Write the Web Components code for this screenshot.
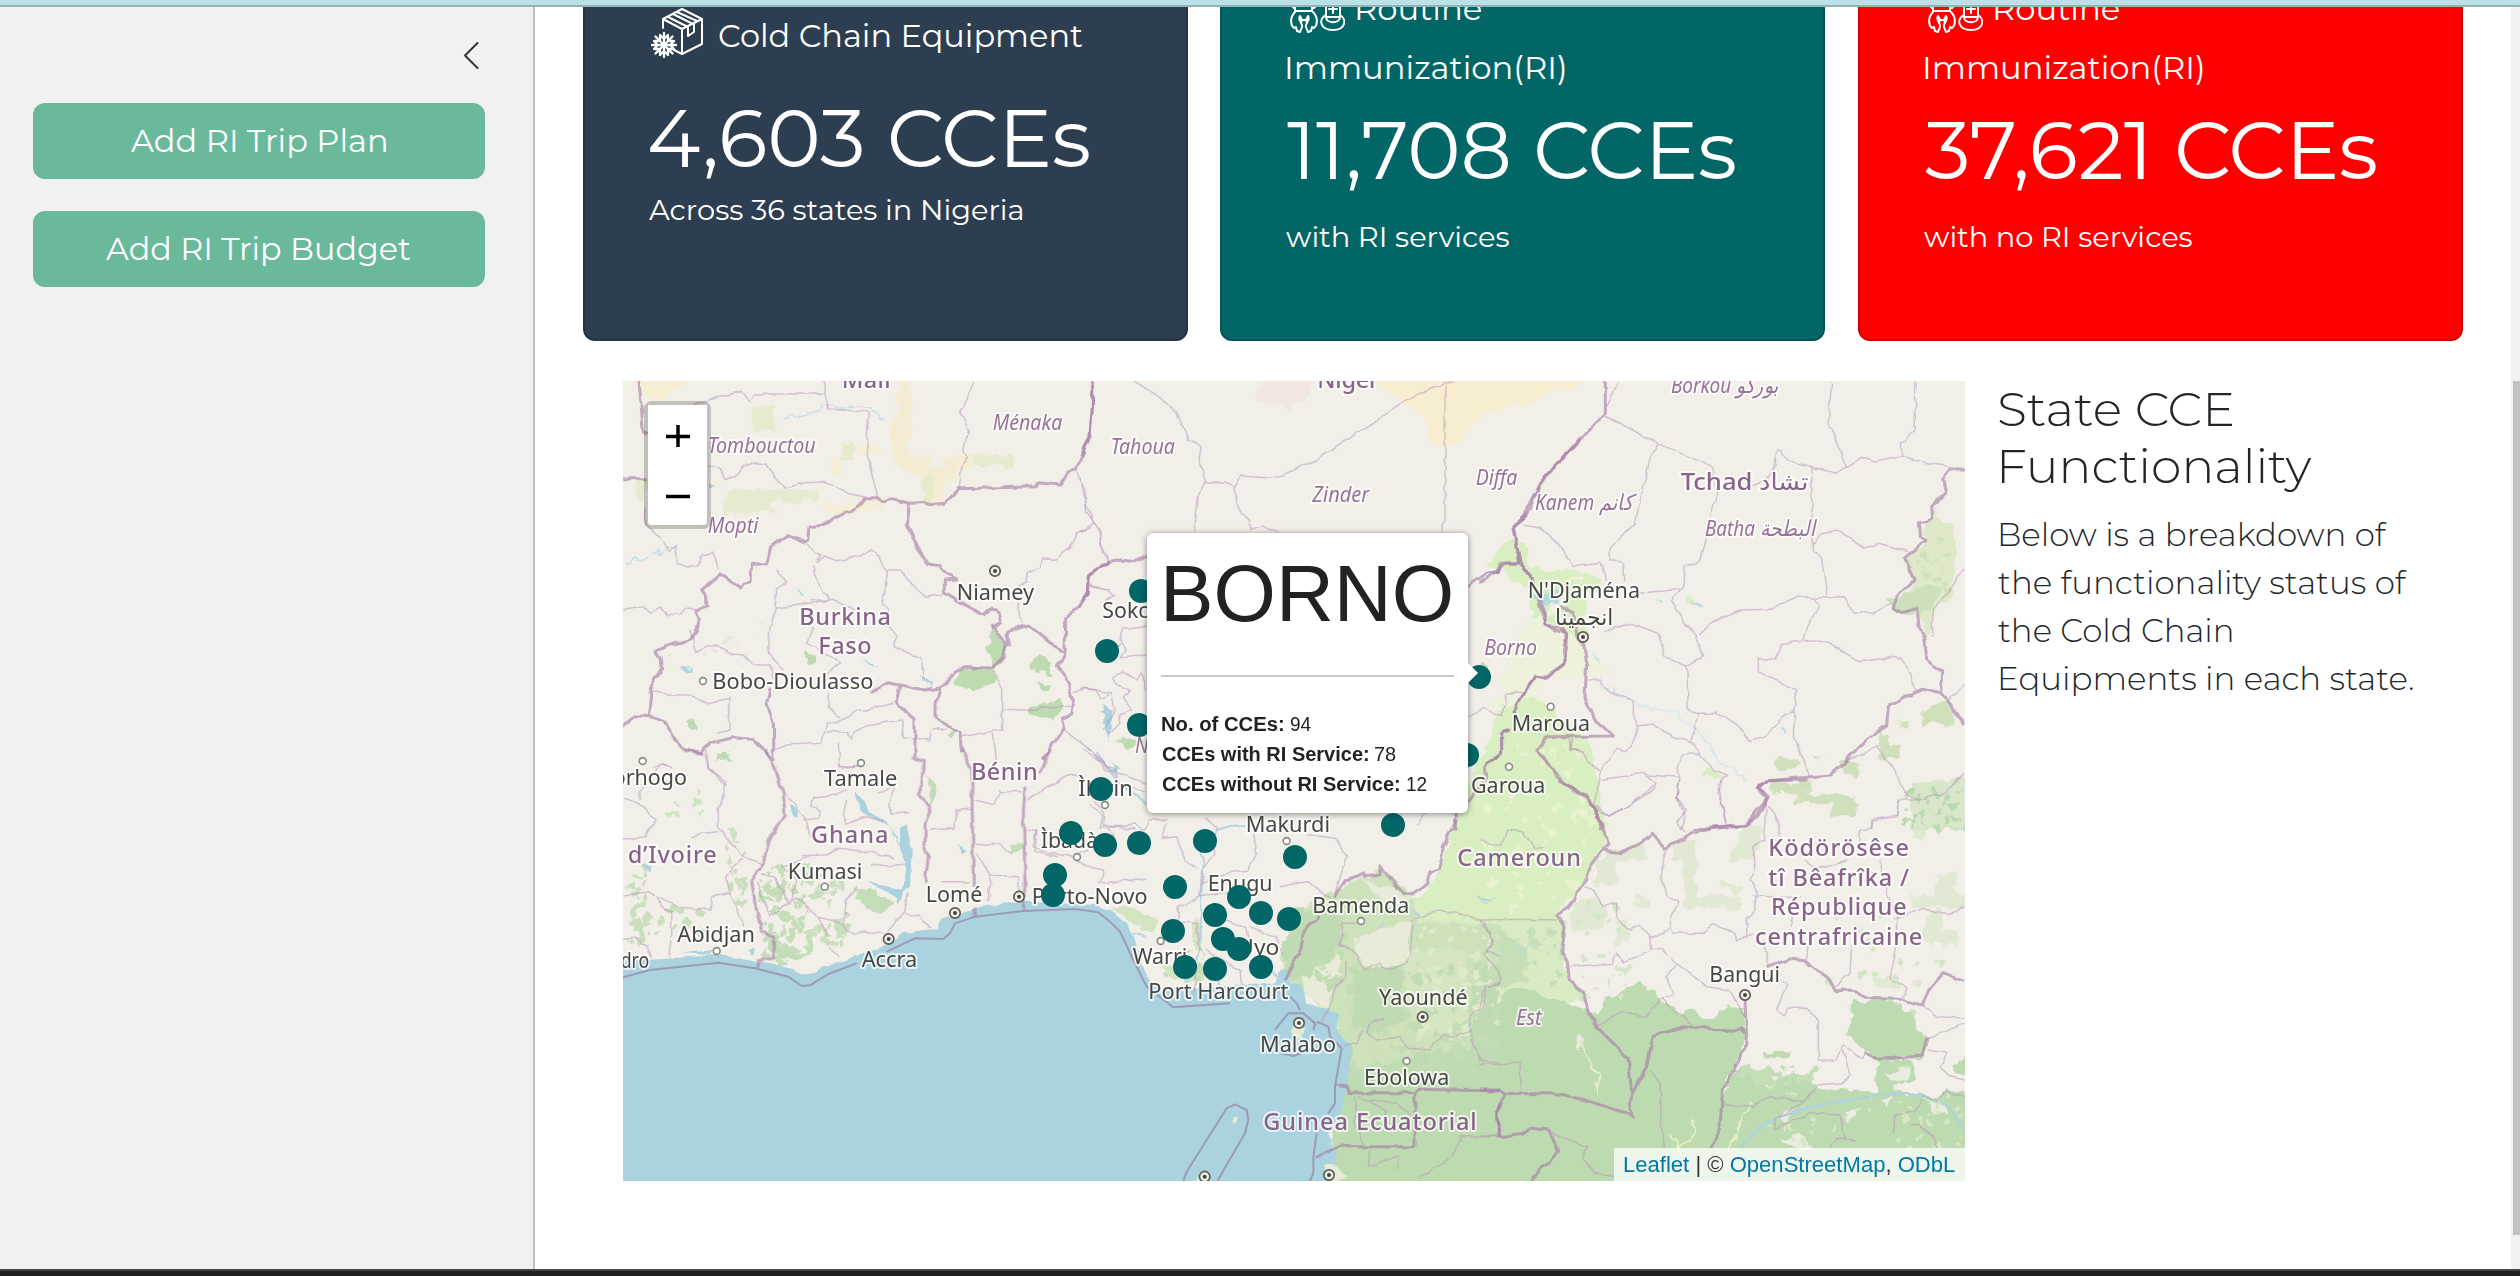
<!DOCTYPE html>
<html lang="en">
<head>
<meta charset="utf-8">
<title>Cold Chain Dashboard</title>
<style>
html,body{margin:0;height:100%;overflow:hidden;background:#fff}
body{font-family:Montserrat,Lato,"Liberation Sans",sans-serif;color:#212529}
</style>
</head>
<body>
<app-shell></app-shell>
<script>
const make=(tag,html,init)=>customElements.define(tag,class extends HTMLElement{
  constructor(){super();this.attachShadow({mode:'open'});}
  connectedCallback(){this.shadowRoot.innerHTML=html(this);if(init)init(this);}
});
const ctx=document.createElement('canvas').getContext('2d');

/* One line of text whose ink spans exactly the width given in "w". */
make('fit-text',()=>`<style>:host{display:block;white-space:nowrap}span{display:inline-block;transform-origin:0 50%}</style><span><slot></slot></span>`,el=>{
  const w=+el.getAttribute('w'),s=getComputedStyle(el),span=el.shadowRoot.querySelector('span');
  ctx.font=`${s.fontWeight} ${s.fontSize} ${s.fontFamily}`;
  const m=ctx.measureText(el.textContent),k=w/(m.actualBoundingBoxRight+m.actualBoundingBoxLeft);
  el.style.width=w+'px';
  span.style.transform=`translateX(${m.actualBoundingBoxLeft*k}px) scaleX(${k})`;
});

make('side-button',()=>`<style>:host{display:flex;justify-content:center;box-sizing:border-box;height:76px;padding-right:2px;border-radius:12px;background:#6ab99b;color:#fff;font-size:32px;line-height:75px}</style><slot></slot>`);

make('side-bar',()=>`<style>
:host{display:flex;flex-direction:column;gap:32px;width:452px;box-sizing:content-box;padding:35px 48px 0 33px;background:#f1f1f1;border-right:2px solid #bfbfbf}
.top{display:flex;justify-content:flex-end;height:29px;padding-right:6px}
</style><div class="top"><svg width="16" height="28" viewBox="0 0 16 28" fill="none" stroke="#333" stroke-width="2"><path d="M14.5 1 2 13.5 14.5 26" stroke-linejoin="round" stroke-linecap="round"/></svg></div>
<side-button><fit-text w="255">Add RI Trip Plan</fit-text></side-button>
<side-button><fit-text w="305">Add RI Trip Budget</fit-text></side-button>`);

const boxIcon=`<svg width="53" height="50" viewBox="0 0 53 50" fill="none" stroke="#fff" stroke-width="2" stroke-linejoin="round" stroke-linecap="round">
<path d="M12 20V11L31 1 51 11V36L31 46 23 42M12 11 31 21 51 11M31 21V46M17 9 36 18.500M22 6 41 15.500M26 4 46 13M37 18.500V28L43 24V15.500"/>
<path stroke-width="2.300" d="M13 25V49M1 37H25M4.500 28.500 21.500 45.500M21.500 28.500 4.500 45.500M9 27 13 31 17 27M9 47 13 43 17 47M3 33 7 37 3 41M23 33 19 37 23 41M4 33 9 33 9 28M17 28 17 33 22 33M4 41 9 41 9 46M17 46 17 41 22 41"/></svg>`;
const babyIcon=`<svg width="56" height="50" viewBox="0 0 56 50" fill="none" stroke="#fff" stroke-width="2" stroke-linejoin="round" stroke-linecap="round">
<path d="M4 20C1 16 5 9 11 9H18C24 9 28 16 25 20M2 22 5 25 7 23M28 22 25 25 23 23M6 18V28H23V18M6 29C1 34 1 42 5 45L7 44 8 48 11 49 13 44C14 40 8 37 11 33L13 37H17L19 33C22 37 16 40 17 44L19 49 22 48 23 44 25 45C29 42 29 34 24 29M13 37 12 40M17 37 18 40"/>
<path d="M37 10H51V34C51 41 37 41 37 34ZM37 19H51M37 32C29 36 31 47 44 47S58 36 51 32M37 34H51M44 22V30M40 26H48"/></svg>`;

make('stat-card',el=>{const a=n=>el.getAttribute(n),routine=a('kind')==='routine';return `<style>
:host{display:block;flex:none;box-sizing:border-box;width:605px;height:391px;border:2px solid rgba(0,0,0,.18);border-radius:12px;color:#fff;background:${a('color')}}
.body{display:flex;flex-direction:column;padding:${routine?'21.500px 0 0 64.500px':'52px 0 0 65px'}}
.head{display:flex;gap:${routine?'12px':'15px'};height:${routine?'59px':'48px'};margin-left:${routine?'2px':'1px'}}
.head svg{display:block;flex:none;margin-top:${routine?'9.500px':'4px'}}
.t{font-size:32px;line-height:48px}.head .t{margin-top:${routine?'11px':'7.500px'}}
.second{line-height:48px;margin-top:11px}
.big{font-size:80px;line-height:96px;margin-top:${routine?'11px':'39px'}}
.sub{font-size:28px;line-height:43px;margin-top:${routine?'17px':'2px'};margin-left:-1px}
</style><div class="body"><div class="head">${routine?babyIcon:boxIcon}<fit-text class="t" w="${a('tw')}">${a('title')}</fit-text></div>
${routine?`<fit-text class="t second" w="278">Immunization(RI)</fit-text>`:''}
<fit-text class="big" w="${a('bw')}">${a('value')}</fit-text><fit-text class="sub" w="${a('sw')}">${a('note')}</fit-text></div>`;});

/* ---------- map ---------- */
const O={A:[610,370],B:[1080,370],C:[1480,370],D:[610,750],E:[1000,750],F:[1480,780]};
const g=(k,inner,extra='')=>`<g transform="translate(${O[k]}) scale(.33333)" ${extra}>${inner}</g>`;
const p=(d)=>`<path d="${d}"/>`;
const admin={
A:`M250 103 395 64 422 98 434 72H640M636 33 655 117 775 126 771 230 782 300 805 384M1094 33 1050 125 1075 180 1061 240 1072 265 1055 290 1048 355M1398 305 1425 360 1430 430 1450 452 1465 475 1475 540 1495 578M1450 460 1400 490 1380 535 1335 568 1300 567 1290 592 1255 605 1250 640 1223 645 1225 735 1242 760M295 285 330 295 345 325 370 325 400 290 425 277 470 282 500 330 527 355 580 338 640 336 680 350 720 375 768 385M105 410 103 460 150 500 178 545 195 525 200 580 230 592 260 585 280 555 305 546 325 600M39 718 100 708 125 733 148 710 175 737 215 735 232 715 258 715M593 520 612 545 630 555 620 580 640 558 680 572 740 560 780 541 805 560 832 605 825 660 815 700 835 718M612 590 622 640 660 690 500 715 480 770 475 850 520 900M500 600 530 640 500 655 495 715M832 600 875 600 905 645 950 682 1000 672M835 718 835 770 865 795 850 825 890 850 935 862 940 930M600 690 665 690 740 720M610 770 590 820 650 850 690 880 650 910M240 780 260 850 290 825 320 825 370 855 405 858 430 885 480 885 490 925M125 965 195 975 240 975 285 1000 360 985 355 1050 360 1080 325 1090M480 1145 530 1125 635 1120 650 1060 700 1050 740 1020 775 1020 850 1000M655 965 655 1010 690 1045M650 1085 710 1085 725 1105 755 1070 800 1062 875 1050 880 1100 960 1110 965 1080 1010 1075M685 1120 690 1190 750 1190M1150 900 1175 950 1175 1080 1110 1090 1055 1100M1175 1018 1250 1020 1385 1005M1440 645 1500 660M1390 965 1430 955 1500 970M1150 1090 1160 1180M285 1150 295 1195 350 1250M130 1190 150 1180 185 1190M1368 1085 1440 1140 1500 1195`,
B:`M163 37 230 75 290 125 325 210 363 232 357 265 375 335 355 380 342 488M375 336 430 336 465 348 480 318 555 323 605 316 725 262 830 190 980 92 1050 55 1120 33M1095 45V450L1085 465 1090 488M465 348 470 395 485 435 508 450 512 478 545 468 595 490M0 320 18 400 38 450 30 475 0 483M38 450 60 480 65 530 88 574M25 648 80 660 100 680 80 690 90 715M200 770 130 778 120 810 135 840 120 860 200 855M120 820 80 880M0 955 45 960 60 985 95 970 105 1020 70 1080M185 905 170 930 130 905 100 920 110 945 150 960 130 985 155 1020 115 1035 120 1060 90 1090M185 910 200 960M0 1110 40 1150 80 1200 130 1215 200 1240M45 1290 75 1330 70 1365 170 1380M1165 1040 1210 1015 1265 1040 1280 970 1330 965M1370 1145 1460 1240M1475 1105 1470 1140H1500M1130 1330 1050 1315 1010 1365`,
C:`M375 138 535 220 695 290 710 370 690 450 660 570 615 590 612 645 575 695 600 735 615 755 645 798 668 860 620 888 625 1020 655 1030 630 1120M418 37 380 110M535 220 510 265 465 460 390 535 390 572 427 575 432 635M130 465 180 475 240 525 280 587 360 577 380 635M480 670 600 658M1055 33 1045 155 1100 290M1308 33 1305 180 1265 220 1264 257M815 345 860 330 885 290 890 240 905 242 920 270 950 282 995 292 1070 310 1100 290 1145 262 1190 273 1260 257 1340 278 1410 290M995 292 997 545 1025 565 1040 675M1000 520 1020 490 1070 480 1110 500 1150 535 1200 520 1285 545M655 795 690 760 780 720 880 718 955 675 1000 685 1090 680 1120 730 1180 728 1240 700M1000 687 1020 710 985 760 972 810M835 905 835 865 890 870 905 820 980 812 1040 815 1140 875 1240 862 1270 870 1310 958M835 905 950 960 940 1090 985 1218M655 1030 710 1030 770 1060 810 1115 860 1095 900 1050 945 1020M370 785 455 760 535 790 555 860 620 888M325 930 360 930 390 970 460 990 460 1045 475 1070 525 1065 580 1100 640 1120 660 1150M475 1070 465 1110 440 1142 410 1135 365 1205 340 1305 390 1335 440 1310 520 1260 525 1240 490 1210 370 1228M268 1105 270 1140 310 1142 325 1180 365 1205M500 1215 600 1222 590 1280 615 1340 600 1380M600 1222 590 1195 610 1155 655 1150 700 1200 740 1212 715 1240 740 1380M1455 600 1430 617 1405 670 1360 715 1355 800M1455 945 1405 990M1095 1175 1190 1130 1240 1200 1275 1265 1315 1290 1390 1270 1455 1210M1315 1290 1255 1290 1250 1335 1180 1345 1175 1380`,
D:`M290 0 295 55 345 95 345 130 325 170 325 235 400 320 455 345M90 150 90 125 150 40 185 50M39 145 75 155 135 205 105 260 39 268M245 260 280 250 325 245M395 325 370 350 350 385 360 430 305 440 300 480 210 472 145 440 115 425 39 438M145 440 150 470 185 485 185 560 175 620M360 430 405 530M39 568 75 565 110 585 125 625M525 130 590 215 600 260M690 40 700 55 745 50M580 210 625 205 635 185 605 170 610 145 680 135 710 115M710 150 700 190 710 220 770 200 820 215M575 320 640 318 690 295 790 308 850 325M455 375 490 380 540 460 560 390 520 350 600 320M780 345 830 350 890 345M740 405 710 450 700 520 620 500 560 440 480 500 440 395M620 500 650 540 655 590 690 620M700 520 715 545 830 548 880 490 895 430M885 490 930 500 960 535M800 130 850 110 840 160 840 190 900 185M960 240 1035 235 1040 180 1085 178M1095 150 1155 165 1170 120M1170 125H1235M1095 280 1175 285 1200 310M1100 310 1140 375 1225 380 1230 450M1140 380 1135 455M990 395 1080 395M1250 150 1300 120 1380 70 1410 75M1250 240 1280 245 1275 305 1340 320`,
E:`M270 165 310 195 300 235 410 225 430 240 445 210 500 210M110 240 100 290 150 310 215 320 265 350 310 360 300 400 395 390 440 385M310 225 340 250 350 285M220 320 265 300M270 270 310 325M500 220 490 265 530 260 555 330 590 355M615 200 650 235 640 310 605 365 600 440M760 240 770 310 745 360 680 370 600 400M920 255 1010 265 1040 320 1005 430M840 410 920 395 990 440M600 440 560 460 535 470 535 515 590 520 600 600M600 440 680 430M680 510 740 535 755 590M620 600 680 640 720 660 725 710M750 530 830 560 845 610M590 640 580 750M250 0 340 60 360 100 470 140M1240 510 1230 615 1220 635 1160 660 1140 640 1090 660 1060 600 1020 590 1030 520 1080 520M1035 630 1035 680 1005 710 1000 750 970 810 940 830M1240 510 1310 480 1370 490 1440 510 1480 570 1460 600 1500 620M1500 700 1460 710 1450 770 1410 800 1415 860 1440 930 1500 940M1415 840 1370 860 1330 855 1290 900 1225 895 1200 860 1130 870 1100 850 1110 820 1150 805M1035 890 1070 880 1090 840M1065 1040V1120L1090 1185M1075 1040 1160 1080 1160 1120M1110 1050 1190 1060 1230 1090M1110 1200 1105 1245 1195 1220 1190 1260M1500 1160H1385L1360 1215 1260 1285`,
F:`M0 420 150 418 230 420M0 180 65 200 80 150 130 155 160 200 190 205M10 420 40 490 10 520 65 590 55 615 15 620 0 680M315 320 340 330 370 380 410 370 410 415 450 450 480 435 510 475 512 510 545 505 585 545M270 560 400 550 410 520 430 545 510 515M560 210 540 290 560 350 595 360 570 430 580 460 660 460 700 435 760 455 770 480 820 465M512 475 570 445M590 545 560 590 580 640 545 655 500 710 430 695 350 735M590 550 680 620 745 630 795 710M545 655 580 690 640 735M860 60 850 180 815 200 825 270 810 300 830 340 820 400 800 420 800 470M865 75 900 130 895 170M815 345 960 350M740 130 715 40 725 0M615 160 590 130 615 90 590 50 600 0M350 90 390 105 440 80 520 20M1255 60 1250 110 1175 120 1175 145 1140 150 1140 185M975 240 1010 265 1100 240M850 480 865 555M985 500 975 540M930 440 940 400M1115 500 1110 580 1065 620M1250 500 1230 595 1280 625 1270 655M1250 480 1250 400 1220 340 1200 240M1240 420 1330 385 1400 405 1455 380M895 600 920 610 890 690 910 705 920 685 980 685 1015 720 1015 840 1070 840 1090 795 1145 835 1150 810M1090 810 1110 890 1085 908 1010 915 975 965 870 950 820 978 730 975M880 1050 885 1015 975 965M880 1050 990 1000 1080 1005 1095 1075M1240 1060 1245 1005 1305 995 1325 960M1295 1030 1340 1050 1375 1105M1050 1105 1065 1075 1130 1080M1330 675 1375 710 1455 715M1455 730 1345 775M1345 810 1400 820 1380 860 1410 890 1455 900M1330 950 1370 960 1400 935 1455 950M510 870 540 910 545 1050 550 1105M0 850 70 855 120 845 125 940M210 1050 240 1070 320 1100 310 1140 345 1180 400 1190M0 1068H60`};
const country={
A:`M87 33 100 185 110 190M39 326H110M1449 33 1447 110 1440 198 1425 235 1412 275 1396 300 1375 305 1348 345 1283 338 1280 350 1045 356 1002 400 962 404 940 398 898 400 835 386 818 394 805 386H768L725 425 690 435 637 466 597 470 593 510 585 516 532 494 482 530 470 585 424 580V635L400 640 393 655 330 612 275 660 290 680V712L258 720 268 745 262 780 240 810 205 818 165 830 135 845 150 865 155 895 120 950 125 975 118 1040 75 1037 39 1070M118 1040 165 1055 190 1100 220 1135 275 1148 300 1120 370 1103 430 1108 490 1170M480 955 470 1000 490 1060 492 1170M898 400 892 465 920 530 955 580 990 590 1010 612 1040 627 1003 630V665L1050 695 1120 735 1140 718 1160 720 1173 755 1150 772 1190 825 1180 860 1148 893H1060L1025 915 1010 945 985 955 945 960 835 938 780 968M1195 830V785L1255 765 1310 810 1345 835 1365 855M1500 578 1475 585 1435 615 1432 670 1405 710 1367 745 1365 855 1345 890 1375 940 1390 1005 1385 1035 1358 1045 1365 1080 1330 1120 1300 1170M870 945 858 1000 915 1050V1160M990 955 978 1000V1045L1050 1090 1055 1150`,
B:`M39 33 37 110 30 198 2 260M0 710 22 670 25 615 65 582 125 570 165 575 205 555M1500 205 1380 345 1340 435 1300 470 1320 578 1265 580 1255 605 1215 610 1165 650M1320 578 1360 630 1395 765 1460 790 1455 880 1400 925 1365 918 1310 1000 1305 1030M1290 1080 1265 1090 1265 1150 1215 1185 1220 1220 1170 1290 1130 1320 1125 1380`,
C:`M376 33V130L215 300 140 410 135 440 98 470 120 578 160 630M120 578 75 580 55 603 0 635M185 690 195 765 240 770 260 800 250 840 255 880 195 922 165 918 110 1000 105 1030M240 705 280 730 290 790 312 830 320 880 315 980 340 1045 400 1098 200 1100 170 1142 220 1195 230 1220 330 1295 350 1330 362 1380M90 1080 65 1090 65 1150 15 1185M1455 297H1410L1388 325 1397 370 1355 410 1358 448 1318 458 1322 500 1338 512 1272 565 1302 630 1245 685 1240 715 1265 728 1310 715 1318 770 1335 810 1340 870 1388 905 1385 968 1325 958 1225 1010 1220 1065 1160 1105 1095 1175 1050 1215 990 1220 860 1233 835 1252 865 1280 835 1335 800 1365 640 1380M1385 968 1455 1065`,
D:`M465 0 490 40 520 130 525 200 480 260 460 340 425 395 435 460 455 545 490 560V625L445 632 440 652M220 0 280 10M905 20 940 35 935 110 925 130 960 180 945 220V300L955 320 945 400M1055 0 1085 60 1090 410M1320 0 1290 70M1245 110 1240 190 1245 400 1240 480M1093 475V500`,
E:`M855 690 905 590 910 540 960 500M1000 440 1035 395 1085 370 1095 380 1140 375V350L1210 430 1245 432 1280 400 1290 365 1320 355 1330 290 1370 205M1005 1005 1040 1010 1050 1028H1245L1255 1018 1500 1023M1245 1028V1190H1065L1025 1185 945 1222M1500 1060 1490 1100 1500 1160`,
F:`M235 0 320 50 345 90 385 190 370 210 330 260 320 300 300 325 270 380 230 405 255 440 245 515 262 545 268 600 310 640 325 700 355 745 445 835 455 940 450 985 460 1010 440 1000 350 970 245 942 75 940 60 930H0M75 940 55 985 50 1015 65 1070 125 1060 150 1045 205 1050 235 1110 210 1150 180 1165 155 1203M455 940 500 860 520 765 640 737 740 755 780 745 800 765 795 810 740 905 728 930 720 1040 695 1105M795 660 800 765M370 210 420 218 500 180 518 160 555 205 640 160 700 145 795 138 860 55 835 25 855 2 980 0M860 560 930 537 970 542 1050 600 1065 632 1110 630 1160 652 1255 655 1300 675 1330 670 1350 625 1390 580 1455 605M1150 815 1200 838 1330 828 1345 770`};
const sea={
D:`M39 682 120 660 325 638 435 655 535 680 575 708 600 706 655 672 740 640M830 605 915 565 1000 567 1020 550 1035 520 1095 500 1240 483 1395 477 1465 487 1500 515`,
E:`M330 515 360 545 400 630 440 710 520 772 690 760M870 740 890 760 900 780M825 840 865 790 910 790 945 820 940 840M950 815 985 830 990 860 1025 895 1005 1010 1005 1060 985 1090M950 1150 940 1222 940 1270 930 1293M845 910 880 918 915 905M550 1293 560 1265 680 1075 705 1063 740 1080 745 1110 735 1150 652 1293`};
const labels=[
'A|Mali|695|55|147|c','A|Tombouctou|293|248|324|s','A|Ménaka|1148|180|209|s','A|Mopti|293|488|152|s','A|Niamey|1040|690|232|t','A|Burkina|568|765|275|c','A|Faso|625|853|160|c','A|Bobo-Dioulasso|307|958|483|t','A|orhogo|8|1246|223|t','A|Tamale|642|1248|220|t','A|Bénin|1083|1230|200|c',
'B|Niger|712|55|185|c','B|Tahoua|92|252|193|s','B|Zinder|697|396|171|s','B|Diffa|1187|346|125|s','B|Sokoto|67|745|208|t','B|Niger|165|1148|140|s','B|Borno|1213|856|158|s','B|Garoua|1173|1268|223|t',
'C|Borkou بوركو|573|68|322|s','C|Kanem كانم|165|420|292|s','C|Tchad تشاد|602|360|383|c','C|Batha البطحة|675|498|330|s',"C|N'Djaména|143|685|337|t",'C|انجمينا|225|765|175|t','C|Maroua|95|1083|235|t',
'D|d’Ivoire|53|338|267|c','D|Ghana|603|280|232|c','D|Kumasi|533|388|224|t','D|Lomé|947|455|170|t','D|Accra|755|652|167|t','D|Abidjan|202|577|233|t','D|dro|32|655|86|t',
'E|Ìlọrin|235|138|163|t','E|Ìbàdàn|122|295|212|t','E|Porto-Novo|95|462|348|t','E|Makurdi|737|245|253|t','E|Enugu|623|422|195|t','E|Bamenda|937|488|291|t','E|Warri|398|642|164|t','E|Uyo|712|615|126|t','E|Port Harcourt|445|747|420|t','E|Yaoundé|1137|764|266|t','E|Malabo|780|905|228|t','E|Ebolowa|1092|1005|256|t','E|Guinea Ecuatorial|790|1140|640|c','E|Cameroun|1372|348|371|c',
'F|Ködörösêse|865|228|422|c','F|tî Bêafrîka /|865|317|422|c','F|République|873|405|407|c','F|centrafricaine|825|495|502|c','F|Bangui|688|605|212|t','F|Est|108|735|77|s'
].map(l=>{const [k,t,x,y,w,c]=l.split('|');return `<text class="${c}" x="${O[k][0]+x/3}" y="${O[k][1]+y/3}" textLength="${w/3}" lengthAdjust="${c==='c'?'spacing':'spacingAndGlyphs'}">${t}</text>`}).join('').replace(/(<text[^>]*lengthAdjust=")spacing("[^>]*>Tchad)/,'$1spacingAndGlyphs$2');
const pts=(o,f)=>Object.entries(o).map(([k,a])=>a.map(([x,y])=>f(O[k][0]+x/3,O[k][1]+y/3)).join('')).join('');
const towns=pts({A:[[279,933],[98,1173],[753,1179]],C:[[212,1010],[87,1190]],D:[[320,603],[644,410]],E:[[315,165],[231,321],[860,273],[482,573],[1083,513],[1220,933]]},(x,y)=>`<circle cx="${x}" cy="${y}" r="3.400" fill="#fff" stroke="#898b82" stroke-width="1.600"/>`);
const capitals=pts({A:[[1155,603]],C:[[309,801]],D:[[836,567],[1035,489]],E:[[57,440],[897,819],[1268,801],[614,1280],[987,1275]],F:[[795,645]]},(x,y)=>`<circle cx="${x}" cy="${y}" r="5.200" fill="#f0efe6" stroke="#5c5d55" stroke-width="1.700"/><circle cx="${x}" cy="${y}" r="2" fill="#444"/>`);
const markers=pts({B:[[183,663],[81,843],[177,1065],[1197,921],[1161,1155]],E:[[303,117],[213,249],[315,285],[417,279],[615,273],[885,321],[165,375],[159,435],[525,411],[717,441],[783,489],[867,507],[645,495],[519,543],[669,567],[717,597],[555,651],[645,657],[783,651],[1179,225]]},(x,y)=>`<circle cx="${x}" cy="${y}" r="12" fill="#036666"/>`);
/* Small scattered vegetation */
let seed=7;const rnd=()=>(seed=(seed*16807)%2147483647)/2147483647;
const scatter=(k,x,y,w,h,n,r,fill)=>{let s='';for(let i=0;i<n;i++){const a=x+rnd()*w,b=y+rnd()*h,q=r*(.4+rnd());s+=`M${a.toFixed()} ${b.toFixed()}l${q.toFixed()} ${(-q*.6).toFixed()} ${(q*.7).toFixed()} ${(q*.9).toFixed()} ${(-q).toFixed()} ${(q*.8).toFixed()}z`}return g(k,`<path d="${s}" fill="${fill}"/>`)};
const F='#bddab1',L='#d9eec1';
const land=
 g('A',`<path fill="#f7edd0" d="M50 10H235L235 33 190 70 130 90 90 60z"/><g fill="#f5eccc" opacity=".75"><path d="M870 10H903V130L895 200 905 255 970 260V290H1040V340H1000V395H940V320H905L840 250 845 180 860 130z"/><path d="M730 225 800 228 795 250H745zM1005 258 1100 255V290H1010zM640 405 720 395 830 392 810 425 650 425zM665 260 695 255 690 330 660 320z"/></g><g fill="#e2eac8" opacity=".8"><path d="M425 112H493V180H425zM360 362 625 360V395H490V430H330zM695 220H735V275H695zM1090 255H1210V288H1090zM935 325H970V400H935zM80 330 110 340V390H80z"/></g><g fill="${F}"><path d="M1145 765 1195 830 1180 865 1148 893 1138 840zM1030 925 1060 898 1160 893 1155 940 1085 958 1035 945zM1258 870 1290 845 1325 880 1330 910 1300 900 1262 905zM1285 940 1320 940 1310 960 1290 958zM1255 1005 1310 1000 1350 985 1355 1030 1320 1055 1255 1030zM325 1153 355 1152 355 1172 328 1170zM240 1050 265 1055 260 1085 240 1080zM1020 1090 1045 1080 1035 1105zM590 845 615 850 612 878 592 875z"/></g><path fill="#aad3df" d="M1475 1010 1500 1015V1110L1478 1060zM570 655 585 668 580 675zM755 875 795 885 780 890zM940 915 962 940 950 945zM215 905 245 885 235 905zM295 345 318 352 300 360z"/><path d="M525 143 590 138 640 112 710 105 780 118 830 150M39 578 90 570 190 530" fill="none" stroke="#c4e0e6" stroke-width="4"/>`)
+g('B',`<path fill="#f7edd0" d="M895 10H1530L1480 55 1400 75 1345 105 1210 130 1120 232 1070 238 1045 200 1035 140 985 100 900 62z"/><path fill="#f2e8e1" d="M545 10H700L670 105 620 115 530 95z"/><path fill="#aad3df" d="M65 1010 95 1015 90 1115 75 1070zM90 1170 118 1200 105 1210z"/><path fill="${F}" d="M100 1115 200 1100 195 1125 135 1140zM1213 870 1225 880 1222 905 1212 890zM1283 910H1303V926H1283z"/>`)
+g('C',`<path fill="${L}" d="M20 590 50 530 95 505 125 520 160 600 270 600 350 620 370 655 210 700 190 770 155 735 140 650 100 640 80 590z"/><path fill="#dde9c9" d="M1370 405 1385 460 1415 475 1430 530 1420 620 1400 690 1360 720 1350 800 1330 810 1318 720 1250 725 1240 700 1300 640 1275 560 1340 510 1320 455 1355 445z"/><path fill="#c4dcb6" opacity=".7" d="M1220 690 1330 640 1390 660 1355 710 1330 740 1250 725z"/><path fill="#cfe0bb" d="M890 1165 940 1160 958 1185 920 1205 890 1190zM1000 1155 1022 1160 1015 1175zM1090 1175H1137V1220H1090zM865 1235H988V1268L880 1270zM950 1270H1125V1338H1057V1303H950zM1190 1095H1227V1130H1262V1165H1195zM1330 1030 1365 990 1390 995 1430 1060H1330zM1257 1052H1280V1075H1257z"/><path fill="#c4dfb8" d="M1293 1233H1500V1380H1293z" opacity=".75"/><path fill="${L}" d="M655 1225 690 1195 722 1210 700 1230zM615 690 645 682 655 710z"/><path fill="#aad3df" d="M638 695 662 715 650 722zM528 690 545 688 538 698zM900 1075 915 1075 912 1090zM150 690 230 650 235 700 195 705z" opacity=".8"/><path d="M350 850 370 950 500 1010 580 1020 650 1080 700 1150 800 1230M430 700" fill="none" stroke="#cfe4e8" stroke-width="4"/>`)
+g('F',`<path fill="#dce6cd" opacity=".8" d="M345 255 390 210 490 190 510 245H410V313H345zM580 180H645V245H580zM610 245H648V350H783V385H610zM725 295 783 318V350L725 320zM475 350H512V385H475zM750 240 790 140 850 130 845 180 815 245zM270 370 350 350 375 380V450H270zM410 420H440V485H405zM1293 0H1500V142H1330V178H1293zM1365 280H1430V345H1500V382H1300V350H1365zM1330 455 1365 390 1385 390V452H1432V488H1330zM1190 590H1260V625H1190zM1295 590H1330V620H1295z"/><path fill="${F}" d="M1120 660 1200 655 1300 690 1310 745 1345 770 1330 830 1200 840 1100 770z"/>`)
/* Cameroon and the Congo basin */
+g('F',`<path fill="#eef1dc" d="M260 -610 310 -610 320 -390 395 -315 200 -300 170 -270 230 -190 60 -180 20 -230 65 -260 70 -330 110 -410 160 -490 255 -525z"/><path fill="${L}" d="M270 -600 310 -590 320 -400 200 -480 255 -525zM60 -220 170 -250 230 -195 330 -110 385 180 370 210 300 320 230 405 250 440 0 440 -200 440 -200 350 -140 300 -110 230 -60 100 -60 60 0 -60z"/><path fill="#d9ebc4" d="M-200 420 255 420 245 515 270 600 320 660 0 700 -300 700 -250 450z"/><path fill="${F}" opacity=".7" d="M0 430 70 470 140 500 135 600 60 620 0 600zM0 600 90 640 0 680z"/><path fill="${F}" d="M-100 660 0 620 150 630 320 690 360 700 390 650 480 605 540 650 600 690 700 720 740 670 795 690 800 770 730 930 690 1240H-440V750L-200 700z"/><path fill="${F}" d="M770 860 850 880 940 880 1000 910 1060 930 1190 935 1195 840 1300 845 1310 900 1240 915 1330 950 1400 930 1500 950V1240H680L725 960zM855 820 930 810 925 835 880 840zM1410 850 1500 815V890L1420 885z"/><path fill="#f2efe9" opacity=".85" d="M880 1010 985 975 910 1020zM900 1080 960 1065 1010 1105H930zM1090 995 1140 990 1110 1020zM1200 960 1235 955 1220 990zM1330 950 1400 980 1405 1005 1350 980zM840 900 890 890 870 930zM285 810 310 760 315 780 300 810zM1220 880 1290 865 1280 900 1230 905z"/><path fill="none" stroke="#e4efc4" stroke-width="7" d="M825 965 785 1010 765 1080 740 1110M580 1070 600 1110 640 1060 635 1010M300 790 350 870 355 950"/>`)
+g('E',`<path fill="#cde2bb" d="M840 640 845 590 900 470 1000 430 1080 380 1150 365 1240 440 1250 520 1500 520V1320H1010L1005 1200 985 1150 1030 1060 1050 920 1000 800 920 740 860 690z"/><path fill="#f2efe2" opacity=".7" d="M1060 580 1130 540 1230 520 1225 630 1160 650 1090 650zM905 690 1030 600 1005 710 985 780 920 740zM1070 380 1240 440 1180 480 1090 400z"/><path fill="${F}" opacity=".8" d="M845 590 900 470 1010 480 1030 590 900 690 860 680zM1060 660 1200 640 1220 800 1130 850 1060 820zM1420 650H1500V1293H1010V1030L1040 960 1200 930 1300 900 1410 900z"/><path fill="${F}" d="M1040 1000H1500V1320H1010L1005 1200 985 1160z"/><path fill="#cfe2bd" d="M340 465 400 480 480 510 460 545 400 530zM480 640 520 690 600 700 620 650 600 610 560 560 600 500 610 640 560 640z" opacity=".9"/><path fill="#e3ebcb" d="M1200 600 1400 600 1410 850 1250 870z" opacity=".4"/>`)
+g('D',`<path fill="${F}" opacity=".9" d="M740 420 790 410 850 460 820 485 770 480 740 450zM500 590 540 600 590 615 560 635 510 620zM1205 280 1235 285 1230 305 1205 310zM955 80 975 90 970 170 955 140zM325 12H355V32H325zM495 395 520 400 510 450 490 440z"/>`);
const specks=scatter('D',45,340,60,250,26,13,'#c9dfbd')+scatter('D',60,470,220,90,24,14,'#cbdfbf')+scatter('D',440,350,150,280,62,15,'#c6ddb9')+scatter('D',590,370,110,220,36,15,'#c9dfbd')+scatter('D',150,120,130,80,10,12,'#cfe2c2')+scatter('D',340,230,60,290,22,14,'#cbdfbf')+scatter('A',50,760,400,100,10,8,'#dbe8cd')
+scatter('E',860,480,160,230,26,16,'#c1dcb4')+scatter('E',1040,640,440,330,110,16,'#c2ddb5')+scatter('E',1240,520,260,340,60,14,'#dfeaca')+scatter('E',480,600,130,90,20,12,'#c6deb9')+scatter('F',0,40,330,370,40,15,'#e9f2cf')+scatter('F',0,440,240,180,40,13,'#c6dfb8')+scatter('F',270,360,160,300,28,12,'#d5e5c8')+scatter('F',770,850,220,60,24,18,'#c4deb8')+scatter('F',860,940,590,170,50,9,'#d7e7c5')+scatter('F',1000,400,400,220,16,13,'#d3e4c7')+scatter('C',1260,1240,180,130,30,12,'#b9d9ae')+scatter('C',1290,500,110,200,26,10,'#d0e0b8')+scatter('C',60,1120,250,240,26,13,'#e9f2cf');
const ocean=g('D',`<path fill="#aad3df" d="M0 634 39 632 150 628 325 614 440 635 530 650 590 677 640 650 740 620 800 600 880 550 940 540 985 538 990 510 1060 488 1140 465 1240 455 1460 465 1500 480 1550 520 1580 590 1600 660 1630 710 1770 715 2000 700 2010 660 2030 660 2040 705 2075 700 2090 760 2185 790 2180 840 2225 890 2220 940 2210 1010 2200 1080 2155 1150 2175 1200 2180 1340H0z"/><g fill="#aad3df"><path d="M535 160 560 180 560 200 545 190zM735 130 765 150 775 185 830 215 860 260 870 300 870 230 890 220 905 300 900 410 880 430 865 465 860 440 770 395 880 420 890 340 840 230 790 205 755 190zM1040 280 1070 305 1060 312zM95 340 125 350 120 365zM415 600 435 595 430 620zM215 610 310 600 300 614z"/></g>`)
+g('E',`<path fill="#e8ebd3" d="M875 850 880 825 915 835 905 870zM700 1100 712 1095 712 1115 702 1118zM580 1320 600 1270 625 1320zM970 1245 1000 1245 1045 1280 1010 1293 975 1285z"/><path fill="none" stroke="#b5d6e0" stroke-width="6" d="M600 300 612 330 605 420 600 600 560 700M650 240 690 228 740 225M440 160 360 100 290 10M395 550 440 560M1130 540 1150 520M1240 480 1255 500M1430 440 1480 455M640 640 660 710M820 660 850 700"/>`)
+g('F',`<path fill="none" stroke="#acd3df" stroke-width="7" d="M780 1105 830 1050 890 1010 1010 975 1140 955 1240 940 1320 945 1390 970 1455 1045"/><path fill="none" stroke="#b9d9e4" stroke-width="4" d="M0 360 20 370 45 350M105 500 130 515 150 490"/>`);
const groups=(o,a)=>Object.entries(o).map(([k,d])=>g(k,p(d),a)).join('');

make('map-canvas',()=>`<style>:host{display:block}svg{display:block}
text{font-family:"Noto Sans","Open Sans","DejaVu Sans",sans-serif;paint-order:stroke;stroke:rgba(255,255,255,.72);stroke-width:4px;stroke-linejoin:round}
.t{font-size:22.500px;fill:#474745}.c{font-size:23.500px;font-weight:500;fill:#876488}.s{font-size:22px;font-style:italic;fill:#977396}</style>
<svg width="1342" height="800" viewBox="623 381 1342 800">
<defs><filter id="rough" filterUnits="userSpaceOnUse" x="603" y="361" width="1382" height="840" color-interpolation-filters="sRGB"><feTurbulence type="fractalNoise" baseFrequency=".07" numOctaves="3" seed="4"/><feDisplacementMap in="SourceGraphic" scale="14" xChannelSelector="R" yChannelSelector="G"/></filter>
<filter id="line" filterUnits="userSpaceOnUse" x="603" y="361" width="1382" height="840" color-interpolation-filters="sRGB"><feTurbulence type="fractalNoise" baseFrequency=".1" numOctaves="1" seed="9"/><feDisplacementMap in="SourceGraphic" scale="6" xChannelSelector="R" yChannelSelector="G"/></filter></defs>
<rect x="623" y="381" width="1342" height="800" fill="#f2efe9"/>
<g filter="url(#rough)">${land}${specks}</g><g filter="url(#line)">${ocean}</g>
<g fill="none" stroke-linejoin="round" filter="url(#line)">${groups(admin,'stroke="#b794b7" stroke-opacity=".5" stroke-width="4.500"')}</g>
<g fill="none" stroke-linejoin="round" filter="url(#line)">${groups(country,'stroke="#a77ea5" stroke-opacity=".62" stroke-width="9"')}</g>
<g fill="none" stroke-linejoin="round">${groups(sea,'stroke="#9b8fb2" stroke-opacity=".85" stroke-width="6"')}</g>
${towns}${capitals}${labels}${markers}</svg>`);

make('zoom-control',()=>`<style>:host{display:flex;flex-direction:column;width:59px;border:4px solid rgba(0,0,0,.2);border-radius:8px;background-clip:padding-box}
div{display:flex;align-items:center;justify-content:center;height:60px;background:#fff}div:first-child{height:58px;border-bottom:2px solid #ccc;border-radius:4px 4px 0 0}div:last-child{border-radius:0 0 4px 4px}</style>
<div><svg width="24" height="24" stroke="#000" stroke-width="3.500"><path d="M0 13.500H24M12 2V24"/></svg></div><div><svg width="24" height="24" stroke="#000" stroke-width="3.500"><path d="M0 13.500H24"/></svg></div>`);

make('map-popup',()=>`<style>:host{display:block;box-sizing:border-box;width:321px;height:280px;padding:0 14px;background:#fff;border-radius:6px;box-shadow:0 1px 6px rgba(0,0,0,.45);color:#222;font-family:"Liberation Sans",Arial,sans-serif}
h1{margin:0;padding:15px 0 0;font-size:80px;line-height:92px;font-weight:400;height:127px}
h1 fit-text{margin-left:5px}
hr{margin:0 0 32px;border:0;height:2px;background:#c8c8c8}
.row{display:flex;gap:7px;height:30px;line-height:30px;font-size:20px;padding-left:1px}b{display:block}
.tip{position:absolute;left:321px;top:130px;width:10px;height:20px;background:#fff;clip-path:polygon(0 0,100% 50%,0 100%)}</style>
<h1><fit-text w="285">BORNO</fit-text></h1><hr>
<div class="row"><b><fit-text w="121">No. of CCEs:</fit-text></b><fit-text w="21">94</fit-text></div>
<div class="row"><b><fit-text w="206">CCEs with RI Service:</fit-text></b><fit-text w="21">78</fit-text></div>
<div class="row"><b><fit-text w="237">CCEs without RI Service:</fit-text></b><fit-text w="20" style="margin-left:1px">12</fit-text></div><div class="tip"></div>`);

make('leaflet-map',()=>`<style>:host{display:block;position:relative;width:1342px;height:800px;overflow:hidden}
zoom-control{position:absolute;left:21px;top:20px}map-popup{position:absolute;left:524px;top:152px}
.attr{position:absolute;right:0;bottom:0;display:flex;box-sizing:border-box;width:351px;height:33px;padding-left:9px;background:rgba(255,255,255,.75);font:22px/34px "Liberation Sans",Arial,sans-serif;color:#333}a{color:#0078a8}</style>
<map-canvas></map-canvas><zoom-control></zoom-control><map-popup></map-popup>
<div class="attr"><span><a>Leaflet</a> | © <a>OpenStreetMap</a>, <a>ODbL</a></span></div>`,el=>{
  const box=el.shadowRoot.querySelector('.attr'),s=box.firstElementChild;s.style.whiteSpace='nowrap';s.style.transformOrigin='0 0';s.style.transform=`scaleX(${332/s.offsetWidth})`;});

make('info-panel',()=>`<style>:host{display:block;font-weight:300}h3{margin:0;font-size:48px;line-height:57px;font-weight:300}
.p{margin-top:16px;font-size:32px;line-height:48px}</style>
<h3><fit-text w="234" style="margin-left:1px">State CCE</fit-text><fit-text w="311" style="margin-left:3px">Functionality</fit-text></h3>
<div class="p"><fit-text w="387" style="margin-left:2px">Below is a breakdown of</fit-text><fit-text w="409">the functionality status of</fit-text><fit-text w="234">the Cold Chain</fit-text><fit-text w="413" style="margin-left:2px">Equipments in each state.</fit-text></div>`);

make('scroll-rail',()=>`<style>:host{display:block;width:9px;background:#f1f1f1;box-sizing:border-box;padding:374px 0 0 2px}div{height:854px;background:#c1c1c1}</style><div></div>`);

make('app-shell',()=>`<style>
:host{display:flex;flex-direction:column;width:2520px;height:1276px;overflow:hidden}
.bar{flex:none;height:5px;background:#b9e2e6;border-bottom:2px solid #93b3b7}
.main{display:flex;height:1262px;overflow:hidden}
side-bar{flex:none}
.content{flex:1;overflow:hidden;padding-left:48px}
.cards{display:flex;gap:32px;margin-top:-57px}
.cards stat-card:last-child{margin-left:1px}
.lower{display:flex;gap:33px;padding:40px 0 0 40px}
.foot{height:5px;background:#1f2021;border-top:2px solid #414543}
</style>
<div class="bar"></div><div class="main"><side-bar></side-bar><div class="content">
<div class="cards">
<stat-card color="#2d3e50" title="Cold Chain Equipment" tw="364" value="4,603 CCEs" bw="439" note="Across 36 states in Nigeria" sw="373"></stat-card>
<stat-card kind="routine" color="#036666" title="Routine" tw="124" value="11,708 CCEs" bw="448" note="with RI services" sw="223"></stat-card>
<stat-card kind="routine" color="#ff0000" title="Routine" tw="124" value="37,621 CCEs" bw="451" note="with no RI services" sw="268"></stat-card>
</div>
<div class="lower"><leaflet-map></leaflet-map><info-panel></info-panel></div>
</div><scroll-rail></scroll-rail></div><div class="foot"></div>`);
</script>
</body>
</html>
